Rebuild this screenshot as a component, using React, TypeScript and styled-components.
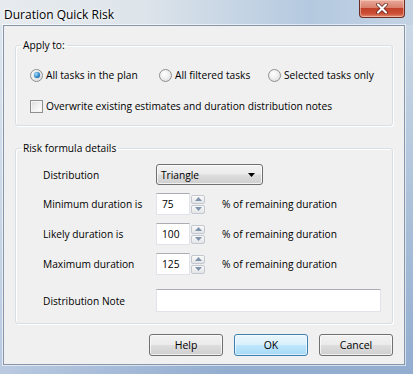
import styled, { createGlobalStyle } from "styled-components";

const GlobalStyle = createGlobalStyle`
  html, body {
    margin: 0;
    padding: 0;
    background: #ffffff;
  }
  body {
    font-family: "Open Sans", "Noto Sans", sans-serif;
    font-size: 10.2px;
    color: #000;
  }
`;

const Window = styled.div`
  width: 413px;
  height: 374px;
  display: flex;
  flex-direction: column;
  overflow: hidden;
  background:
    linear-gradient(to right, rgba(255, 255, 255, 0.35) 0%, rgba(255, 255, 255, 0) 55%),
    linear-gradient(to bottom, #dfe6ee 0px, #cbd8e6 25px, #a9bfd8 60%, #93add0 100%);
`;

const TitleBar = styled.div`
  height: 25px;
  display: flex;
  justify-content: space-between;
  align-items: flex-start;
  flex-shrink: 0;
  background: linear-gradient(
    to right,
    #e7ebef 0%,
    #dde4ea 35%,
    #c8d6e5 55%,
    #b4c9df 75%,
    #c3d3e4 100%
  );
`;

const Title = styled.div`
  padding: 7px 0 0 4px;
  font-size: 12px;
  line-height: 16px;
  color: #000;
  text-shadow: 0 0 6px #fff, 0 0 3px #fff;
`;

const CloseButton = styled.div`
  width: 46px;
  height: 18px;
  margin-right: 8px;
  box-sizing: border-box;
  border: 1px solid #6b2d24;
  border-top: none;
  border-radius: 0 0 4px 4px;
  background: linear-gradient(
    to bottom,
    #e9a99a 0%,
    #d9806c 45%,
    #c2412a 50%,
    #cc4f36 80%,
    #e28b6d 100%
  );
  box-shadow: inset 0 0 0 1px rgba(255, 220, 210, 0.5);
  display: flex;
  align-items: center;
  justify-content: center;
`;

const Frame = styled.div`
  flex: 1;
  display: flex;
  padding: 0 8px 9px 3px;
  min-height: 0;
`;

const Client = styled.div`
  flex: 1;
  display: flex;
  flex-direction: column;
  background: #f0f0f0;
  border: 1px solid #8797a9;
  box-shadow: 0 0 0 1px rgba(255, 255, 255, 0.6);
  padding: 11px 11px 0 11px;
`;

const Group = styled.fieldset`
  margin: 0;
  padding: 0;
  min-width: 0;
  border: 1px solid #d5dfe5;
  border-radius: 3px;
  box-shadow: inset 1px 1px 0 #ffffff, 1px 1px 0 #ffffff;
  & + & {
    margin-top: 14px;
  }
`;

const Legend = styled.legend`
  margin-left: 5px;
  padding: 0 2px;
  line-height: 16px;
`;

const GroupBody = styled.div<{ $top: number; $left: number }>`
  display: flex;
  flex-direction: column;
  padding: ${(p) => p.$top}px 0 11px ${(p) => p.$left}px;
`;

const RadioRow = styled.div`
  display: grid;
  grid-template-columns: 129px 109px auto;
  height: 16px;
  align-items: center;
  margin-bottom: 15px;
`;

const Choice = styled.label`
  display: flex;
  align-items: center;
  gap: 3px;
  line-height: 16px;
  white-space: nowrap;
`;

const Radio = styled.span<{ $on?: boolean }>`
  width: 11px;
  height: 11px;
  border-radius: 50%;
  border: 1px solid #8e8f8f;
  background: radial-gradient(circle at 40% 35%, #ffffff 0%, #f0f0f0 45%, #d4d4d4 100%);
  display: flex;
  align-items: center;
  justify-content: center;
  flex-shrink: 0;
  &::after {
    content: "";
    display: ${(p) => (p.$on ? "block" : "none")};
    width: 6px;
    height: 6px;
    border-radius: 50%;
    background: radial-gradient(circle at 35% 35%, #a8e2fb 0%, #2f86c9 55%, #124f87 100%);
    box-shadow: 0 0 1px #2c628b;
  }
`;

const CheckRow = styled.div`
  height: 16px;
  display: flex;
  align-items: center;
`;

const Checkbox = styled.span`
  width: 11px;
  height: 11px;
  border: 1px solid #8e8f8f;
  background: linear-gradient(135deg, #dcdcdc 0%, #f4f4f4 60%, #ffffff 100%);
  box-shadow: inset 0 0 0 1px #f4f4f4;
  flex-shrink: 0;
`;

const FormRow = styled.div<{ $h: number; $mt: number }>`
  display: grid;
  grid-template-columns: 113px auto;
  align-items: center;
  height: ${(p) => p.$h}px;
  margin-top: ${(p) => p.$mt}px;
`;

const Label = styled.span`
  line-height: 16px;
  white-space: nowrap;
`;

const Select = styled.div`
  width: 107px;
  height: 21px;
  box-sizing: border-box;
  border: 1px solid #707070;
  border-radius: 3px;
  background: linear-gradient(to bottom, #f2f2f2 0%, #ebebeb 48%, #dddddd 52%, #cfcfcf 100%);
  box-shadow: inset 0 0 0 1px rgba(255, 255, 255, 0.7);
  display: flex;
  align-items: center;
  justify-content: space-between;
  padding: 0 7px 0 4px;
`;

const NumberCell = styled.div`
  display: flex;
  align-items: center;
`;

const NumberBox = styled.div`
  width: 34px;
  height: 22px;
  box-sizing: border-box;
  background: #fff;
  border: 1px solid #e2e3ea;
  border-top-color: #abadb3;
  display: flex;
  align-items: center;
  padding-left: 5px;
`;

const Spinner = styled.div`
  display: flex;
  flex-direction: column;
  gap: 1px;
  margin-left: 1px;
`;

const SpinButton = styled.div`
  width: 14px;
  height: 9px;
  box-sizing: border-box;
  border: 1px solid #c3c8d0;
  border-radius: 2px;
  background: linear-gradient(to bottom, #fbfbfb 0%, #efefef 50%, #e2e4e8 100%);
  display: flex;
  align-items: center;
  justify-content: center;
`;

const Suffix = styled.span`
  margin-left: 17px;
  white-space: nowrap;
`;

const NoteBox = styled.div`
  width: 225px;
  height: 23px;
  box-sizing: border-box;
  background: #fff;
  border: 1px solid #e2e3ea;
  border-top-color: #abadb3;
`;

const ButtonRow = styled.div`
  display: flex;
  justify-content: flex-end;
  gap: 11px;
  margin-top: 10px;
`;

const Button = styled.div<{ $default?: boolean }>`
  width: 74px;
  height: 22px;
  box-sizing: border-box;
  border: 1px solid ${(p) => (p.$default ? "#3c7fb1" : "#707070")};
  border-radius: 3px;
  background: ${(p) =>
    p.$default
      ? "linear-gradient(to bottom, #eaf6fd 0%, #d9f0fc 48%, #bee6fd 52%, #a7d9f5 100%)"
      : "linear-gradient(to bottom, #f2f2f2 0%, #ebebeb 48%, #dddddd 52%, #cfcfcf 100%)"};
  box-shadow: inset 0 0 0 1px
    ${(p) => (p.$default ? "rgba(255, 255, 255, 0.6)" : "rgba(255, 255, 255, 0.7)")};
  display: flex;
  align-items: center;
  justify-content: center;
  font-size: 10.5px;
`;

const Arrow = ({ up }: { up?: boolean }) => (
  <svg width="7" height="4" viewBox="0 0 7 4">
    <path d={up ? "M0 4 L3.5 0 L7 4 Z" : "M0 0 L7 0 L3.5 4 Z"} fill="#7f93ad" />
  </svg>
);

const Spin = () => (
  <Spinner>
    <SpinButton>
      <Arrow up />
    </SpinButton>
    <SpinButton>
      <Arrow />
    </SpinButton>
  </Spinner>
);

const durations = [
  { label: "Minimum duration is", value: "75" },
  { label: "Likely duration is", value: "100" },
  { label: "Maximum duration", value: "125" },
];

export default function App() {
  return (
    <>
      <GlobalStyle />
      <Window>
        <TitleBar>
          <Title>Duration Quick Risk</Title>
          <CloseButton>
            <svg width="12" height="11" viewBox="0 0 12 11">
              <path
                d="M2 1.5 L10 9.5 M10 1.5 L2 9.5"
                stroke="#5a1d14"
                strokeWidth="3.6"
                strokeLinecap="round"
              />
              <path
                d="M2 1.5 L10 9.5 M10 1.5 L2 9.5"
                stroke="#ffffff"
                strokeWidth="2.2"
                strokeLinecap="round"
              />
            </svg>
          </CloseButton>
        </TitleBar>
        <Frame>
          <Client>
            <Group>
              <Legend>Apply to:</Legend>
              <GroupBody $top={14} $left={14}>
                <RadioRow>
                  <Choice>
                    <Radio $on />
                    All tasks in the plan
                  </Choice>
                  <Choice>
                    <Radio />
                    All filtered tasks
                  </Choice>
                  <Choice>
                    <Radio />
                    Selected tasks only
                  </Choice>
                </RadioRow>
                <CheckRow>
                  <Choice>
                    <Checkbox />
                    Overwrite existing estimates and duration distribution notes
                  </Choice>
                </CheckRow>
              </GroupBody>
            </Group>
            <Group>
              <Legend>Risk formula details</Legend>
              <GroupBody $top={0} $left={27}>
                <FormRow $h={21} $mt={8}>
                  <Label>Distribution</Label>
                  <Select>
                    Triangle
                    <svg width="7" height="4" viewBox="0 0 7 4">
                      <path d="M0 0 L7 0 L3.5 4 Z" fill="#000" />
                    </svg>
                  </Select>
                </FormRow>
                {durations.map((d) => (
                  <FormRow key={d.label} $h={22} $mt={8}>
                    <Label>{d.label}</Label>
                    <NumberCell>
                      <NumberBox>{d.value}</NumberBox>
                      <Spin />
                      <Suffix>% of remaining duration</Suffix>
                    </NumberCell>
                  </FormRow>
                ))}
                <FormRow $h={23} $mt={14}>
                  <Label>Distribution Note</Label>
                  <NoteBox />
                </FormRow>
              </GroupBody>
            </Group>
            <ButtonRow>
              <Button>Help</Button>
              <Button $default>OK</Button>
              <Button>Cancel</Button>
            </ButtonRow>
          </Client>
        </Frame>
      </Window>
    </>
  );
}
